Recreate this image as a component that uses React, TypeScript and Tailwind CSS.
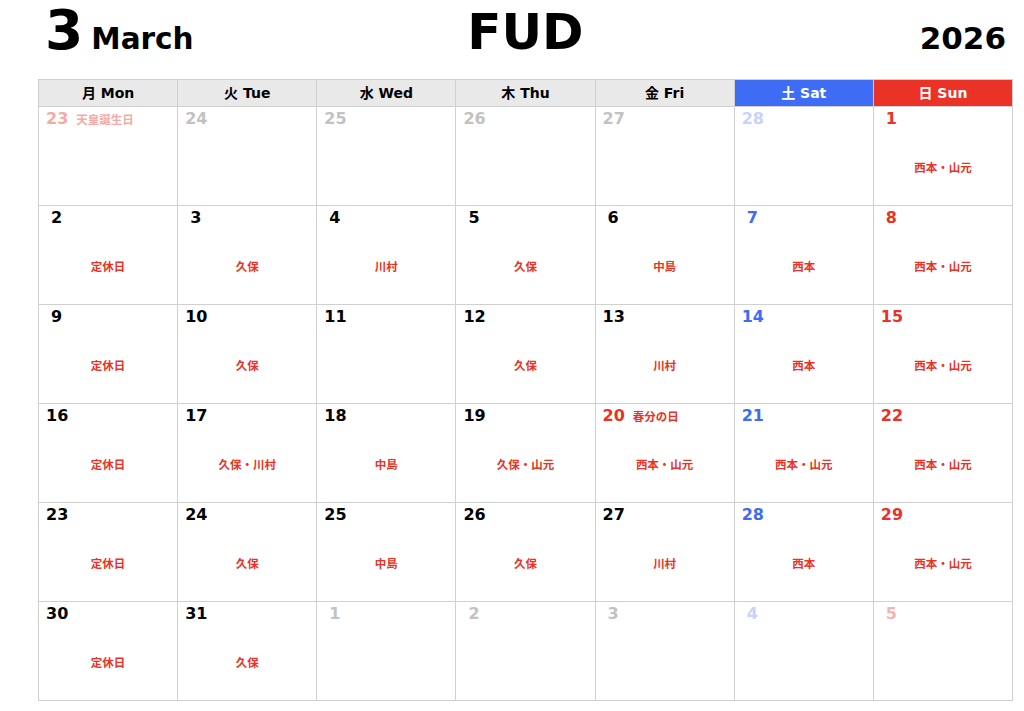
const FONT = "font-['DejaVu_Sans','Noto_Sans_CJK_JP',sans-serif]"

type Tone = "normal" | "sat" | "sun" | "holiday" | "muted" | "mutedSat" | "mutedSun" | "mutedHoliday"

type Day = { n: number; tone: Tone; holiday?: string; staff?: string }

const toneClass: Record<Tone, string> = {
  normal: "text-black",
  sat: "text-[#3e6cf4]",
  sun: "text-[#ea3226]",
  holiday: "text-[#ea3226]",
  muted: "text-[#c2c2c2]",
  mutedSat: "text-[#c6d3fb]",
  mutedSun: "text-[#f5b3b0]",
  mutedHoliday: "text-[#f5aaa6]",
}

const headers = [
  { label: "月 Mon", cls: "bg-[#e9e9e9] text-black" },
  { label: "火 Tue", cls: "bg-[#e9e9e9] text-black" },
  { label: "水 Wed", cls: "bg-[#e9e9e9] text-black" },
  { label: "木 Thu", cls: "bg-[#e9e9e9] text-black" },
  { label: "金 Fri", cls: "bg-[#e9e9e9] text-black" },
  { label: "土 Sat", cls: "bg-[#3e6cf4] text-white" },
  { label: "日 Sun", cls: "bg-[#ea3226] text-white" },
]

const weeks: Day[][] = [
  [
    { n: 23, tone: "mutedHoliday", holiday: "天皇誕生日" },
    { n: 24, tone: "muted" },
    { n: 25, tone: "muted" },
    { n: 26, tone: "muted" },
    { n: 27, tone: "muted" },
    { n: 28, tone: "mutedSat" },
    { n: 1, tone: "sun", staff: "西本・山元" },
  ],
  [
    { n: 2, tone: "normal", staff: "定休日" },
    { n: 3, tone: "normal", staff: "久保" },
    { n: 4, tone: "normal", staff: "川村" },
    { n: 5, tone: "normal", staff: "久保" },
    { n: 6, tone: "normal", staff: "中島" },
    { n: 7, tone: "sat", staff: "西本" },
    { n: 8, tone: "sun", staff: "西本・山元" },
  ],
  [
    { n: 9, tone: "normal", staff: "定休日" },
    { n: 10, tone: "normal", staff: "久保" },
    { n: 11, tone: "normal" },
    { n: 12, tone: "normal", staff: "久保" },
    { n: 13, tone: "normal", staff: "川村" },
    { n: 14, tone: "sat", staff: "西本" },
    { n: 15, tone: "sun", staff: "西本・山元" },
  ],
  [
    { n: 16, tone: "normal", staff: "定休日" },
    { n: 17, tone: "normal", staff: "久保・川村" },
    { n: 18, tone: "normal", staff: "中島" },
    { n: 19, tone: "normal", staff: "久保・山元" },
    { n: 20, tone: "holiday", holiday: "春分の日", staff: "西本・山元" },
    { n: 21, tone: "sat", staff: "西本・山元" },
    { n: 22, tone: "sun", staff: "西本・山元" },
  ],
  [
    { n: 23, tone: "normal", staff: "定休日" },
    { n: 24, tone: "normal", staff: "久保" },
    { n: 25, tone: "normal", staff: "中島" },
    { n: 26, tone: "normal", staff: "久保" },
    { n: 27, tone: "normal", staff: "川村" },
    { n: 28, tone: "sat", staff: "西本" },
    { n: 29, tone: "sun", staff: "西本・山元" },
  ],
  [
    { n: 30, tone: "normal", staff: "定休日" },
    { n: 31, tone: "normal", staff: "久保" },
    { n: 1, tone: "muted" },
    { n: 2, tone: "muted" },
    { n: 3, tone: "muted" },
    { n: 4, tone: "mutedSat" },
    { n: 5, tone: "mutedSun" },
  ],
]

function DayCell({ day }: { day: Day }) {
  // single digits sit a little further in, like a leading space
  return (
    <div className="bg-white h-[98px] flex flex-col pl-[7px] pt-[2px]">
      <div className={`flex items-baseline gap-[8px] h-[20px] leading-[20px] ${toneClass[day.tone]}`}>
        <span className={`text-[16px] font-bold ${day.n < 10 ? "pl-[5px]" : ""}`}>{day.n}</span>
        {day.holiday ? <span className="text-[11.5px] font-bold">{day.holiday}</span> : null}
      </div>
      {day.staff ? (
        <p className="mt-[32px] pr-[7px] text-center text-[11.5px] leading-[14px] font-bold text-[#ea3226]">{day.staff}</p>
      ) : null}
    </div>
  )
}

export default function App() {
  return (
    <div className={`w-[1024px] h-[711px] bg-white ${FONT}`}>
      <header className="h-[79px] ml-[38px] w-[975px] pl-[7px] pr-[7px] grid grid-cols-[1fr_auto_1fr] items-baseline font-bold text-black">
        <div className="flex items-baseline gap-[8px]">
          <span className="text-[55px] leading-[1.12]">3</span>
          <span className="text-[29.5px] leading-[1.12]">March</span>
        </div>
        <h1 className="text-[50px] leading-[1.12]">FUD</h1>
        <div className="text-right text-[31px] leading-[1.12]">2026</div>
      </header>

      <div className="ml-[38px] w-[975px] bg-[#d0d0d0] p-px grid grid-cols-7 gap-px">
        {headers.map((h) => (
          <div key={h.label} className={`h-[26px] flex items-center justify-center text-[14px] font-bold ${h.cls}`}>
            {h.label}
          </div>
        ))}
        {weeks.flat().map((day, i) => (
          <DayCell key={i} day={day} />
        ))}
      </div>
    </div>
  )
}
